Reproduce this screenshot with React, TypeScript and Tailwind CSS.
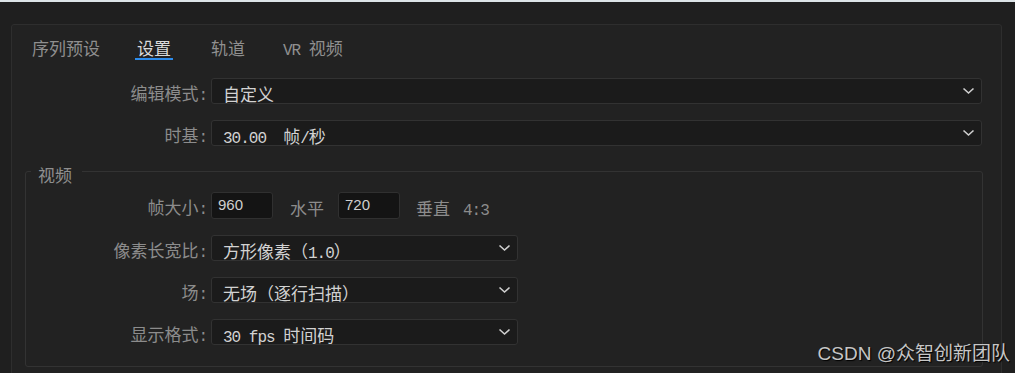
import React from "react";

const M = ({ children }: { children: React.ReactNode }) => (
  <span className="font-['Liberation_Mono',monospace] text-[16px] tracking-[-1px]">{children}</span>
);

const Chevron = () => (
  <svg width="13" height="8" viewBox="0 0 13 8" className="shrink-0">
    <path d="M1.5 1.5l5 4.5 5-4.5" fill="none" stroke="#cfcfcf" strokeWidth="1.6" />
  </svg>
);

const Select = ({ w, children }: { w: string; children: React.ReactNode }) => (
  <div
    className={`${w} ml-[4px] flex h-[26px] shrink-0 items-start justify-between overflow-visible rounded-[3px] border border-[#323232] bg-[#1b1b1b] pl-[11px] pr-[6px]`}
  >
    <div className="h-[20px] mt-[5px] leading-[20px] text-[#d2d2d2] whitespace-pre">{children}</div>
    <div className="mt-[8px]">
      <Chevron />
    </div>
  </div>
);

const Label = ({ w, children }: { w: string; children: React.ReactNode }) => (
  <div className={`${w} h-[20px] mt-[5px] shrink-0 text-right leading-[20px] text-[#8c8c8c] whitespace-pre`}>
    {children}
  </div>
);

const NumBox = ({ v }: { v: string }) => (
  <div className="h-[27px] w-[62px] shrink-0 rounded-[3px] border border-[#303030] bg-[#141414] pl-[6px] pt-[2px] font-['Liberation_Sans',sans-serif] text-[15px] leading-[20px] text-[#cfcfcf]">
    {v}
  </div>
);

const Row = ({ mt, children }: { mt: string; children: React.ReactNode }) => (
  <div className={`${mt} flex h-[26px] items-start`}>{children}</div>
);

export default function App() {
  return (
    <div className="relative h-[373px] w-[1015px] overflow-hidden bg-[#1f1f1f] font-['Noto_Sans_CJK_SC',sans-serif] text-[17px]">
      <div className="h-[2px] bg-[#dce4e7]" />
      <div className="ml-[11px] mt-[22px] h-[400px] w-[991px] rounded-[3px] border border-[#2e2e2e] bg-[#222222] pt-[13px]">
        {/* tabs */}
        <div className="flex h-[22px] pl-[20px] leading-[20px]">
          <div className="h-[20px] text-[#8f8f8f]">序列预设</div>
          <div className="ml-[35px] h-[22px] border-b-2 border-[#2d8ceb] px-[2px] text-[#dadada]">设置</div>
          <div className="ml-[38px] h-[20px] text-[#8f8f8f]">轨道</div>
          <div className="ml-[38px] h-[20px] whitespace-pre text-[#8f8f8f]">
            <M>VR </M>视频
          </div>
        </div>

        <Row mt="mt-[18px]">
          <Label w="w-[195px]">
            编辑模式<M>:</M>
          </Label>
          <Select w="w-[771px]">自定义</Select>
        </Row>
        <Row mt="mt-[16px]">
          <Label w="w-[195px]">
            时基<M>:</M>
          </Label>
          <Select w="w-[771px]">
            <M>30.00  </M>帧<M>/</M>秒
          </Select>
        </Row>

        <fieldset className="ml-[13px] mt-[16px] w-[958px] rounded-[3px] border border-[#333333] pb-[21px]">
          <legend className="ml-[5px] pl-[7px] pr-[10px] pt-[8px] leading-[10px] text-[#8f8f8f]">视频</legend>
          <div className="mt-[12px] flex h-[27px] items-start">
            <Label w="w-[181px]">
              帧大小<M>:</M>
            </Label>
            <div className="ml-[4px] flex items-start">
              <NumBox v="960" />
              <div className="ml-[17px] mt-[6px] h-[20px] leading-[20px] text-[#8c8c8c]">水平</div>
              <div className="ml-[14px]">
                <NumBox v="720" />
              </div>
              <div className="ml-[16px] mt-[6px] h-[20px] leading-[20px] text-[#8c8c8c]">垂直</div>
              <div className="ml-[13px] mt-[6px] h-[20px] leading-[20px] text-[#8c8c8c]">
                <M>4:3</M>
              </div>
            </div>
          </div>
          <Row mt="mt-[16px]">
            <Label w="w-[181px]">
              像素长宽比<M>:</M>
            </Label>
            <Select w="w-[307px]">
              方形像素（<M>1.0</M>）
            </Select>
          </Row>
          <Row mt="mt-[16px]">
            <Label w="w-[181px]">
              场<M>:</M>
            </Label>
            <Select w="w-[307px]">无场（逐行扫描）</Select>
          </Row>
          <Row mt="mt-[16px]">
            <Label w="w-[181px]">
              显示格式<M>:</M>
            </Label>
            <Select w="w-[307px]">
              <M>30 fps </M>时间码
            </Select>
          </Row>
        </fieldset>
      </div>

      <div className="absolute bottom-[7px] right-[5px] font-['Liberation_Sans','Noto_Sans_CJK_SC',sans-serif] text-[19px] leading-[24px] text-[#c6c6c6] [text-shadow:1px_1px_1px_#000]">
        CSDN @众智创新团队
      </div>
    </div>
  );
}
